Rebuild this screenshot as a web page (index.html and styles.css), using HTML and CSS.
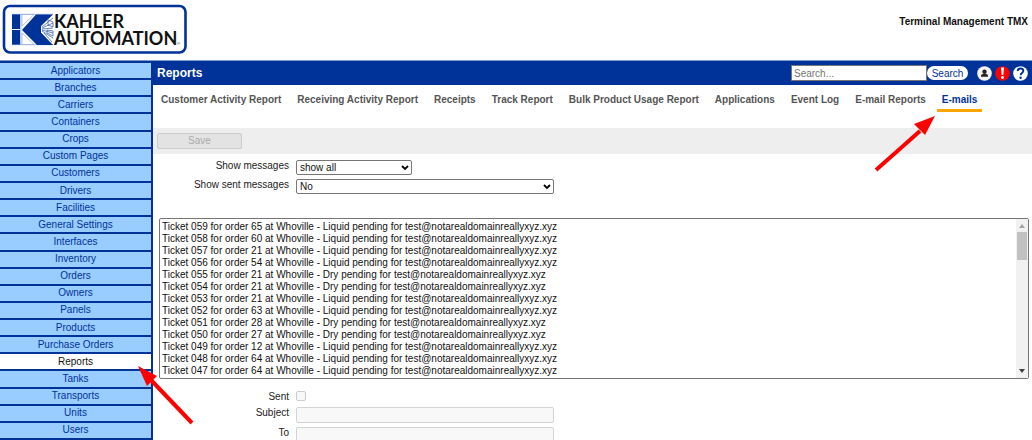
FILE: index.html
```
<!DOCTYPE html>
<html lang="en">
<head>
    <meta charset="UTF-8">
    <meta name="viewport" content="width=device-width, initial-scale=1.0">
    <title>Reports - Terminal Management TMX</title>
    <link rel="stylesheet" href="styles.css">
</head>
<body>
    <header class="header">
        <svg class="logo" width="188" height="56" viewBox="0 0 188 56" role="img" aria-label="Kahler Automation">
            <rect x="4" y="6" width="181.500" height="46.500" rx="6" fill="#fff" stroke="#003399" stroke-width="2.600"/>
            <rect x="12" y="14" width="8" height="15" fill="#003399"/>
            <rect x="12" y="30" width="8" height="15" fill="#003399"/>
            <path d="M12 14.300h41M12 44.700h41M20.800 14v31" fill="none" stroke="#7f9bd0" stroke-width=".7"/>
            <path d="M22 14.500h12L22 26zM22 33l12 11.500H22z" fill="#fff" stroke="#7f9bd0" stroke-width=".6"/>
            <path d="M36 14.500h17L41 26v6.500L53 45H37L22 30z" fill="#003399"/>
            <path d="M53 16L41 27v5l12 11z" fill="#fff"/>
            <path d="M42 27L53 18M42 28l11-5M42 29l11-1M42 30l11 3M42 31l11 7M44 33l8 9M48 20l5 2v5l-5-2zM47 30l6 1v5l-6-3z" fill="none" stroke="#4066b3" stroke-width=".8"/>
            <text class="logo-text" x="54" y="28">KAHLER</text>
            <text class="logo-text" x="54" y="45">AUTOMATION</text>
            <text class="logo-mark" x="177" y="45">®</text>
        </svg>
        <div class="product">Terminal Management TMX</div>
    </header>

    <div class="layout">
        <nav class="sidebar">
            <a href="#">Applicators</a>
            <a href="#">Branches</a>
            <a href="#">Carriers</a>
            <a href="#">Containers</a>
            <a href="#">Crops</a>
            <a href="#">Custom Pages</a>
            <a href="#">Customers</a>
            <a href="#">Drivers</a>
            <a href="#">Facilities</a>
            <a href="#">General Settings</a>
            <a href="#">Interfaces</a>
            <a href="#">Inventory</a>
            <a href="#">Orders</a>
            <a href="#">Owners</a>
            <a href="#">Panels</a>
            <a href="#">Products</a>
            <a href="#">Purchase Orders</a>
            <a href="#" class="current">Reports</a>
            <a href="#">Tanks</a>
            <a href="#">Transports</a>
            <a href="#">Units</a>
            <a href="#">Users</a>
        </nav>

        <main class="main">
            <div class="title-bar">
                <h1 class="title">Reports</h1>
                <form class="search">
                    <input type="text" class="search-input" placeholder="Search..." aria-label="Search">
                    <button type="button" class="search-btn">Search</button>
                </form>
                <div class="icons">
                    <a href="#" aria-label="Account">
                        <svg width="15" height="15" viewBox="0 0 15 15">
                            <circle cx="7.500" cy="7.500" r="7.300" fill="#f4f4f4"/>
                            <circle cx="7.500" cy="5.700" r="2.200" fill="#222"/>
                            <path d="M4 10.800V9.500Q4 8 6 8h3q2 0 2 1.500v1.300z" fill="#222"/>
                        </svg>
                    </a>
                    <a href="#" aria-label="Alerts">
                        <svg width="15" height="15" viewBox="0 0 15 15">
                            <circle cx="7.500" cy="7.500" r="7.300" fill="#f00"/>
                            <path d="M6 1.500h3L8.300 9H6.700z" fill="#fff"/>
                            <circle cx="7.500" cy="11.500" r="1.400" fill="#fff"/>
                        </svg>
                    </a>
                    <a href="#" aria-label="Help">
                        <svg width="15" height="15" viewBox="0 0 15 15">
                            <circle cx="7.500" cy="7.500" r="7.300" fill="#fff"/>
                            <path d="M4.700 5Q4.800 2.500 7.500 2.500T10.300 4.800Q10.300 6 9 7T7.600 9.300" fill="none" stroke="#003399" stroke-width="1.900"/>
                            <circle cx="7.600" cy="11.700" r="1.200" fill="#003399"/>
                        </svg>
                    </a>
                </div>
            </div>

            <nav class="tabs">
                <a href="#">Customer Activity Report</a>
                <a href="#">Receiving Activity Report</a>
                <a href="#">Receipts</a>
                <a href="#">Track Report</a>
                <a href="#">Bulk Product Usage Report</a>
                <a href="#">Applications</a>
                <a href="#">Event Log</a>
                <a href="#">E-mail Reports</a>
                <a href="#" class="current">E-mails</a>
            </nav>

            <div class="toolbar">
                <button type="button" class="save-btn" disabled>Save</button>
            </div>

            <div class="form">
                <label for="showMessages">Show messages</label>
                <div class="select-wrap short">
                    <select id="showMessages">
                        <option>show all</option>
                    </select>
                    <svg class="chevron" width="8" height="6" viewBox="0 0 8 6"><path d="M1 1l3 3 3-3" fill="none" stroke="#000" stroke-width="1.800"/></svg>
                </div>
                <label for="showSent">Show sent messages</label>
                <div class="select-wrap">
                    <select id="showSent">
                        <option>No</option>
                    </select>
                    <svg class="chevron" width="8" height="6" viewBox="0 0 8 6"><path d="M1 1l3 3 3-3" fill="none" stroke="#000" stroke-width="1.800"/></svg>
                </div>
            </div>

            <div class="list-wrap">
                <select class="list" size="13" aria-label="E-mails">
                    <option>Ticket 059 for order 65 at Whoville - Liquid pending for test@notarealdomainreallyxyz.xyz</option>
                    <option>Ticket 058 for order 60 at Whoville - Liquid pending for test@notarealdomainreallyxyz.xyz</option>
                    <option>Ticket 057 for order 21 at Whoville - Liquid pending for test@notarealdomainreallyxyz.xyz</option>
                    <option>Ticket 056 for order 54 at Whoville - Liquid pending for test@notarealdomainreallyxyz.xyz</option>
                    <option>Ticket 055 for order 21 at Whoville - Dry pending for test@notarealdomainreallyxyz.xyz</option>
                    <option>Ticket 054 for order 21 at Whoville - Dry pending for test@notarealdomainreallyxyz.xyz</option>
                    <option>Ticket 053 for order 21 at Whoville - Liquid pending for test@notarealdomainreallyxyz.xyz</option>
                    <option>Ticket 052 for order 63 at Whoville - Liquid pending for test@notarealdomainreallyxyz.xyz</option>
                    <option>Ticket 051 for order 28 at Whoville - Dry pending for test@notarealdomainreallyxyz.xyz</option>
                    <option>Ticket 050 for order 27 at Whoville - Dry pending for test@notarealdomainreallyxyz.xyz</option>
                    <option>Ticket 049 for order 12 at Whoville - Liquid pending for test@notarealdomainreallyxyz.xyz</option>
                    <option>Ticket 048 for order 64 at Whoville - Liquid pending for test@notarealdomainreallyxyz.xyz</option>
                    <option>Ticket 047 for order 64 at Whoville - Liquid pending for test@notarealdomainreallyxyz.xyz</option>
                </select>
                <div class="scrollbar">
                    <svg width="6" height="4" viewBox="0 0 6 4"><path d="M0 4l3-4 3 4z" fill="#a3a3a3"/></svg>
                    <div class="thumb"></div>
                    <svg width="6" height="4" viewBox="0 0 6 4"><path d="M0 0h6L3 4z" fill="#404040"/></svg>
                </div>
            </div>

            <div class="form details">
                <label for="sent">Sent</label>
                <input type="checkbox" id="sent" class="check" disabled>
                <label for="subject">Subject</label>
                <input type="text" id="subject" class="field" disabled>
                <label for="to">To</label>
                <input type="text" id="to" class="field" disabled>
            </div>
        </main>
    </div>

    <!-- callout arrows -->
    <svg class="arrow arrow-tab" width="62" height="58" viewBox="0 0 62 58">
        <path d="M2 55L46 16" stroke="#f00" stroke-width="4"/>
        <path d="M61 1L40 9l5 5 6 6z" fill="#f00"/>
    </svg>
    <svg class="arrow arrow-menu" width="56" height="60" viewBox="0 0 56 60">
        <path d="M12 13L54 57" stroke="#f00" stroke-width="4"/>
        <path d="M0 0l19 10-5 5-5 5z" fill="#f00"/>
    </svg>
</body>
</html>
```

FILE: styles.css
```
* {
    margin: 0;
    padding: 0;
    box-sizing: border-box;
}

body {
    position: relative;
    display: flex;
    flex-direction: column;
    height: 100vh;
    overflow: hidden;
    background: #fff;
    color: #222;
    font-family: "Liberation Sans", Arial, sans-serif;
    font-size: 10px;
    line-height: 12px;
}

a {
    text-decoration: none;
}

input,
select,
button {
    font: inherit;
}

.header {
    display: flex;
    flex: none;
    justify-content: space-between;
    height: 61px;
    padding-right: 4px;
    border-bottom: 1px solid #7f99cc;
}

.logo {
    display: block;
}

.logo-text {
    font-family: Lato, sans-serif;
    font-size: 18px;
    font-weight: 700;
    fill: #111;
}

.logo-mark {
    font-size: 4px;
    fill: #111;
}

.product {
    padding-top: 16px;
    color: #111;
    font-weight: bold;
}

.layout {
    display: grid;
    flex: 1;
    grid-template-columns: 153px 1fr;
    grid-template-rows: minmax(0, 1fr);
    min-height: 0;
}

.sidebar {
    display: grid;
    grid-auto-rows: 1fr;
    gap: 2px;
    padding: 2px 2px 2px 0;
    background: #003399;
}

.sidebar a {
    display: flex;
    align-items: center;
    justify-content: center;
    background: #99ccff;
    color: #003399;
}

.sidebar .current {
    background: #fff;
    color: #111;
}

.main {
    min-width: 0;
}

.title-bar {
    display: flex;
    align-items: center;
    height: 24px;
    padding: 0 4px;
    background: #003399;
}

.title {
    flex: 1;
    color: #fff;
    font-size: 12px;
}

.search {
    display: flex;
    align-items: center;
}

.search-input {
    width: 136px;
    height: 16px;
    padding: 0 2px;
    border: 1px solid #767676;
    background: #fff;
}

.search-input::placeholder {
    color: #757575;
}

.search-btn {
    width: 41px;
    height: 14px;
    padding-top: 1px;
    border: none;
    border-radius: 7px;
    background: #fff;
    color: #003399;
}

.icons {
    display: flex;
    gap: 3px;
    margin-left: 9px;
}

.icons svg {
    display: block;
}

.tabs {
    display: flex;
    gap: 6px;
    height: 43px;
    padding: 9px 3px 0;
}

.tabs a {
    height: 18px;
    padding: 0 5px;
    color: #555;
    font-weight: bold;
    white-space: nowrap;
}

.tabs .current {
    border-bottom: 3px solid #ffa500;
    color: #003399;
}

.toolbar {
    padding: 5px 4px;
    background: #eee;
}

.save-btn {
    display: block;
    width: 85px;
    height: 16px;
    border: 1px solid #ccc;
    border-radius: 2px;
    background: #e3e3e3;
    color: #aaa;
}

.form {
    display: grid;
    grid-template-columns: 136px minmax(0, 258px);
    gap: 4px 7px;
    padding-top: 6px;
}

.form label {
    text-align: right;
}

.select-wrap {
    position: relative;
}

.select-wrap select {
    display: block;
    width: 100%;
    height: 15px;
    padding: 0 3px;
    border: 1px solid #767676;
    border-radius: 2px;
    appearance: none;
    background: #fff;
    color: #111;
}

.short {
    width: 116px;
}

.chevron {
    position: absolute;
    top: 5px;
    right: 3px;
}

.list-wrap {
    position: relative;
    margin: 24px 3px 0 6px;
}

.list {
    display: block;
    width: 100%;
    height: 161px;
    padding-top: 2px;
    border: 1px solid #767676;
    border-radius: 2px;
    background: #fff;
    color: #111;
    scrollbar-width: none;
}

.list option {
    height: 12px;
    min-height: 12px;
    padding: 0 2px;
}

.scrollbar {
    position: absolute;
    top: 1px;
    right: 1px;
    bottom: 1px;
    display: flex;
    flex-direction: column;
    align-items: center;
    width: 12px;
    padding: 5px 0;
    background: #f1f1f1;
}

.thumb {
    width: 10px;
    height: 28px;
    margin: 4px 0 auto;
    background: #c1c1c1;
}

.details {
    padding-top: 12px;
}

.check {
    width: 10px;
    height: 10px;
    border: 1px solid #ccc;
    border-radius: 2px;
    appearance: none;
    background: #f8f8f8;
}

.field {
    width: 100%;
    height: 16px;
    border: 1px solid #d3d3d3;
    border-radius: 2px;
    background: #f8f8f8;
}

.arrow {
    position: absolute;
    pointer-events: none;
}

.arrow-tab {
    top: 115px;
    left: 874px;
}

.arrow-menu {
    top: 366px;
    left: 138px;
}
```
